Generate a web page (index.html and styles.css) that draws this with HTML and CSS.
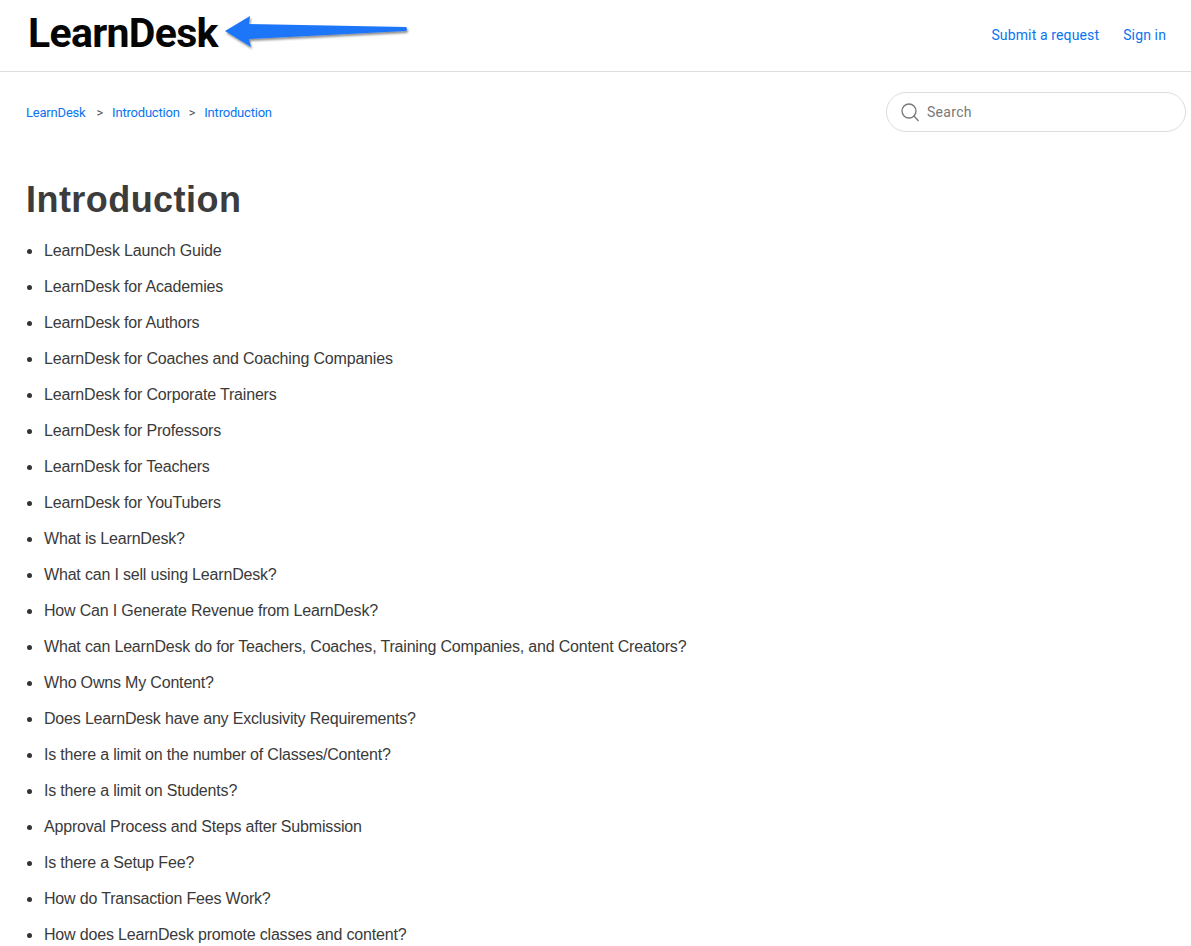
FILE: index.html
```html
<!DOCTYPE html>
<html lang="en">
<head>
<meta charset="utf-8">
<title>Introduction – LearnDesk</title>
<link rel="stylesheet" href="styles.css">
</head>
<body>
<header class="site-header">
  <div class="brand">
    <a class="logo" href="#">LearnDesk</a>
    <svg class="arrow" width="190" height="38" viewBox="0 0 190 38" aria-hidden="true">
      <defs>
        <filter id="arrow-shadow" x="-5%" y="-20%" width="110%" height="160%">
          <feDropShadow dx="1" dy="2" stdDeviation="1" flood-color="#000" flood-opacity=".45"/>
        </filter>
      </defs>
      <path d="M1 16 L26 1 L25 9 L182 12 Q184 14 182 16 L25 24 L27 32 Z" fill="#1f76f7" filter="url(#arrow-shadow)"/>
    </svg>
  </div>
  <nav class="user-nav">
    <a href="#">Submit a request</a>
    <a href="#">Sign in</a>
  </nav>
</header>
<main class="page">
  <div class="sub-nav">
    <ol class="breadcrumbs">
      <li><a href="#">LearnDesk</a></li>
      <li><a href="#">Introduction</a></li>
      <li><a href="#">Introduction</a></li>
    </ol>
    <form class="search">
      <svg class="search-icon" width="18" height="19" viewBox="0 0 18 19" aria-hidden="true">
        <circle cx="8" cy="8" r="7" fill="none" stroke="#777" stroke-width="1.3"/>
        <path d="M13 13 L17.5 18" stroke="#777" stroke-width="1.3" fill="none"/>
      </svg>
      <input class="search-input" type="search" placeholder="Search">
    </form>
  </div>
  <h1 class="title">Introduction</h1>
  <ul class="articles">
    <li>LearnDesk Launch Guide</li>
    <li>LearnDesk for Academies</li>
    <li>LearnDesk for Authors</li>
    <li>LearnDesk for Coaches and Coaching Companies</li>
    <li>LearnDesk for Corporate Trainers</li>
    <li>LearnDesk for Professors</li>
    <li>LearnDesk for Teachers</li>
    <li>LearnDesk for YouTubers</li>
    <li>What is LearnDesk?</li>
    <li>What can I sell using LearnDesk?</li>
    <li>How Can I Generate Revenue from LearnDesk?</li>
    <li>What can LearnDesk do for Teachers, Coaches, Training Companies, and Content Creators?</li>
    <li>Who Owns My Content?</li>
    <li>Does LearnDesk have any Exclusivity Requirements?</li>
    <li>Is there a limit on the number of Classes/Content?</li>
    <li>Is there a limit on Students?</li>
    <li>Approval Process and Steps after Submission</li>
    <li>Is there a Setup Fee?</li>
    <li>How do Transaction Fees Work?</li>
    <li>How does LearnDesk promote classes and content?</li>
  </ul>
</main>
</body>
</html>
```
FILE: styles.css
```css
html, body {
  margin: 0;
  padding: 0;
  height: 946px;
  overflow: hidden;
  background: #fff;
}
body {
  font-family: "Liberation Sans", Arial, sans-serif;
  font-size: 16px;
  color: #3a3a3a;
}
a {
  color: #0a74f0;
  text-decoration: none;
}
.site-header {
  display: flex;
  justify-content: space-between;
  align-items: center;
  height: 71px;
  border-bottom: 1px solid #ddd;
  padding: 0 25px 0 28px;
}
.brand {
  display: flex;
  align-items: center;
  gap: 6px;
  margin-top: -5px;
}
.logo {
  font-family: Roboto, sans-serif;
  font-size: 41px;
  font-weight: 700;
  color: #050505;
  letter-spacing: -0.7px;
  line-height: 44px;
}
.arrow {
  margin-top: 2px;
}
.user-nav {
  display: flex;
  gap: 24px;
  font-family: Roboto, sans-serif;
  font-size: 14px;
  letter-spacing: 0.13px;
  margin-top: -2px;
}
.page {
  padding: 20px 5px 0 26px;
}
.sub-nav {
  display: flex;
  justify-content: space-between;
  align-items: center;
  height: 40px;
}
.breadcrumbs {
  display: flex;
  list-style: none;
  margin: 0;
  padding: 0;
  font-family: Roboto, sans-serif;
  font-size: 13px;
  letter-spacing: -0.2px;
}
.breadcrumbs li:first-child {
  margin-right: 2px;
}
.breadcrumbs li + li::before {
  content: ">";
  color: #555;
  margin: 0 9px;
}
.search {
  display: flex;
  align-items: center;
  gap: 8px;
  box-sizing: border-box;
  width: 300px;
  height: 40px;
  padding: 0 14px;
  border: 1px solid #ddd;
  border-radius: 20px;
}
.search-input {
  flex: 1;
  min-width: 0;
  border: 0;
  outline: 0;
  padding: 0;
  font: 400 14px Roboto, sans-serif;
  letter-spacing: 0.3px;
}
.search-input::placeholder {
  color: #777;
}
.title {
  margin: 47px 0 0;
  font-size: 36px;
  font-weight: 700;
  line-height: 42px;
  letter-spacing: 0.45px;
  color: #3c3c3c;
}
.articles {
  list-style: none;
  margin: 18px 0 0;
  padding: 0;
}
.articles li {
  display: flex;
  align-items: center;
  line-height: 24px;
  margin-bottom: 12px;
  letter-spacing: -0.18px;
}
.articles li::before {
  content: "";
  flex: none;
  width: 5px;
  height: 5px;
  margin: 0 12px 0 1px;
  border-radius: 50%;
  background: #333;
}
```
